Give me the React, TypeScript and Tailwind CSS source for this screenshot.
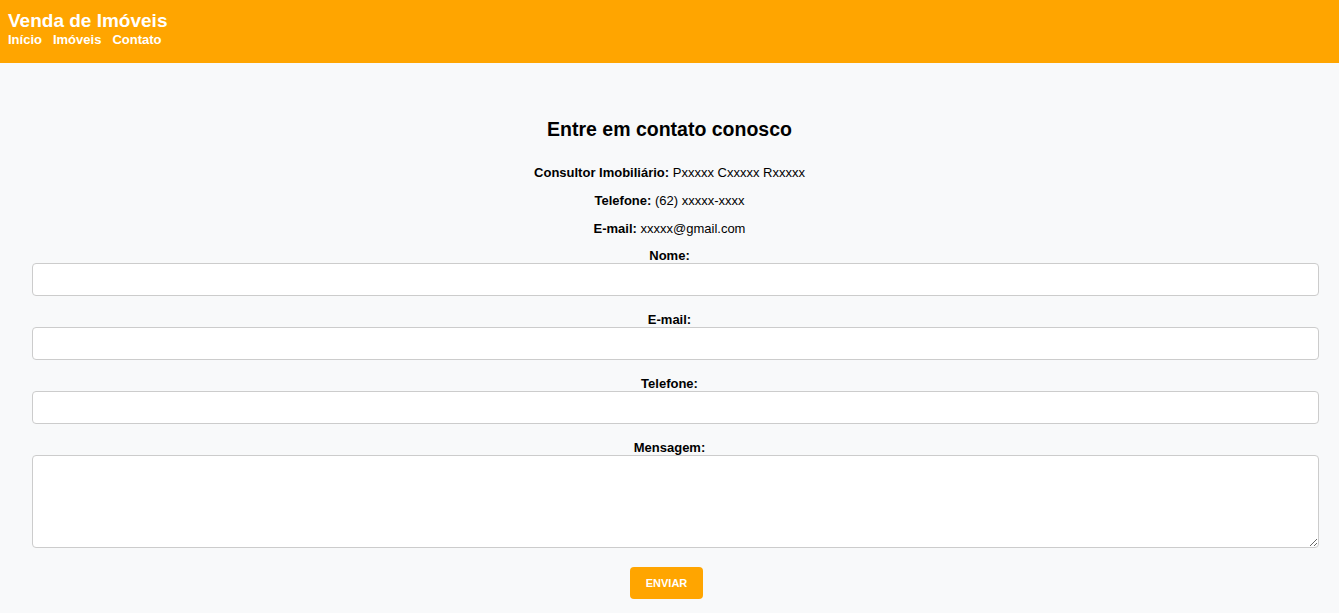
import React from 'react';

const fields = [
  { id: 'nome', label: 'Nome:' },
  { id: 'email', label: 'E-mail:' },
  { id: 'telefone', label: 'Telefone:' },
];

const Header: React.FC = () => (
  <header className="h-[63px] bg-[#ffa500] px-2 pt-[9px] text-white">
    <h1 className="text-[19px] font-bold leading-[23px]">Venda de Imóveis</h1>
    <nav className="flex gap-[11px] text-[13px] font-bold leading-[15px]">
      <a href="#">Início</a>
      <a href="#">Imóveis</a>
      <a href="#">Contato</a>
    </nav>
  </header>
);

const App: React.FC = () => {
  return (
    <div className="min-h-screen bg-[#f8f9fa] font-['Liberation_Sans',Arial,sans-serif] text-black">
      <Header />
      <main className="px-8 pt-[55px] text-center">
        <h2 className="text-[19.5px] font-bold leading-[23px]">Entre em contato conosco</h2>

        {/* contact info */}
        <div className="mt-[24px] flex flex-col gap-[13px] text-[13px] leading-[15px]">
          <p>
            <strong>Consultor Imobiliário:</strong> Pxxxxx Cxxxxx Rxxxxx
          </p>
          <p>
            <strong>Telefone:</strong> (62) xxxxx-xxxx
          </p>
          <p>
            <strong>E-mail:</strong> xxxxx@gmail.com
          </p>
        </div>

        <form className="mt-[12px] flex flex-col text-[13px]">
          {fields.map((f) => (
            <div key={f.id} className="mb-4 flex flex-col">
              <label htmlFor={f.id} className="font-bold leading-[15px]">
                {f.label}
              </label>
              <input
                id={f.id}
                type="text"
                className="h-[33px] w-[calc(100%+12px)] rounded-[4px] border border-[#cccccc] bg-white px-[5px]"
              />
            </div>
          ))}
          <div className="flex flex-col">
            <label htmlFor="mensagem" className="font-bold leading-[15px]">
              Mensagem:
            </label>
            <textarea
              id="mensagem"
              className="h-[93px] w-[calc(100%+12px)] rounded-[4px] border border-[#cccccc] bg-white px-[5px]"
            />
          </div>
          <div className="mt-[19px] flex justify-center">
            <button
              type="submit"
              className="mr-[6px] h-8 w-[73px] rounded-[4px] bg-[#ffa500] text-[11px] font-bold text-white"
            >
              ENVIAR
            </button>
          </div>
        </form>
      </main>
    </div>
  );
};

export default App;
